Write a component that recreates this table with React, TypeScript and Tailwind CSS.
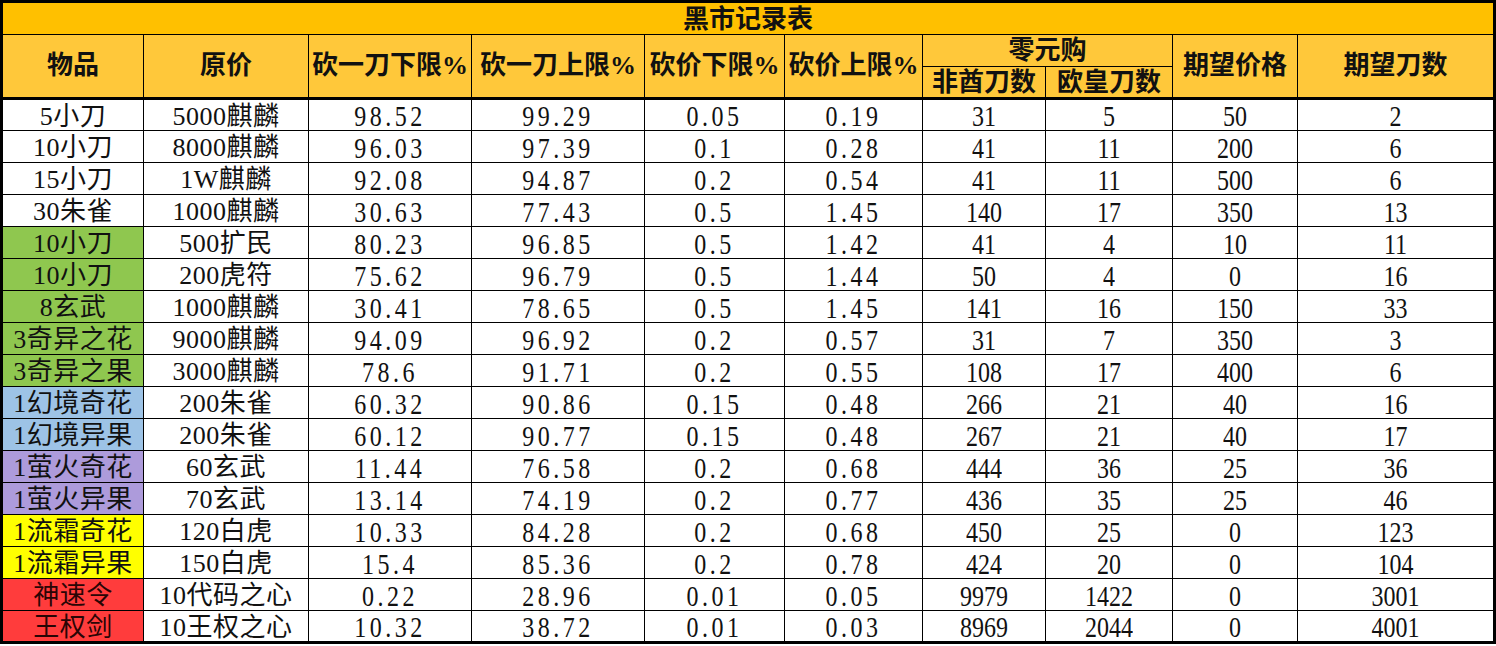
import React from "react";

type Row = { c: string[]; bg: string; red?: boolean };

const W = "bg-white";
const G = "bg-[#8fc74f]";
const B = "bg-[#9dc3e6]";
const P = "bg-[#ad9bdb]";
const Y = "bg-[#ffff00]";
const R = "bg-[#ff3c3c]";

const rows: Row[] = [
  { c: ["5小刀", "5000麒麟", "98.52", "99.29", "0.05", "0.19", "31", "5", "50", "2"], bg: W },
  { c: ["10小刀", "8000麒麟", "96.03", "97.39", "0.1", "0.28", "41", "11", "200", "6"], bg: W },
  { c: ["15小刀", "1W麒麟", "92.08", "94.87", "0.2", "0.54", "41", "11", "500", "6"], bg: W },
  { c: ["30朱雀", "1000麒麟", "30.63", "77.43", "0.5", "1.45", "140", "17", "350", "13"], bg: W },
  { c: ["10小刀", "500扩民", "80.23", "96.85", "0.5", "1.42", "41", "4", "10", "11"], bg: G },
  { c: ["10小刀", "200虎符", "75.62", "96.79", "0.5", "1.44", "50", "4", "0", "16"], bg: G },
  { c: ["8玄武", "1000麒麟", "30.41", "78.65", "0.5", "1.45", "141", "16", "150", "33"], bg: G },
  { c: ["3奇异之花", "9000麒麟", "94.09", "96.92", "0.2", "0.57", "31", "7", "350", "3"], bg: G },
  { c: ["3奇异之果", "3000麒麟", "78.6", "91.71", "0.2", "0.55", "108", "17", "400", "6"], bg: G },
  { c: ["1幻境奇花", "200朱雀", "60.32", "90.86", "0.15", "0.48", "266", "21", "40", "16"], bg: B },
  { c: ["1幻境异果", "200朱雀", "60.12", "90.77", "0.15", "0.48", "267", "21", "40", "17"], bg: B },
  { c: ["1萤火奇花", "60玄武", "11.44", "76.58", "0.2", "0.68", "444", "36", "25", "36"], bg: P },
  { c: ["1萤火异果", "70玄武", "13.14", "74.19", "0.2", "0.77", "436", "35", "25", "46"], bg: P },
  { c: ["1流霜奇花", "120白虎", "10.33", "84.28", "0.2", "0.68", "450", "25", "0", "123"], bg: Y },
  { c: ["1流霜异果", "150白虎", "15.4", "85.36", "0.2", "0.78", "424", "20", "0", "104"], bg: Y },
  { c: ["神速令", "10代码之心", "0.22", "28.96", "0.01", "0.05", "9979", "1422", "0", "3001"], bg: R, red: true },
  { c: ["王权剑", "10王权之心", "10.32", "38.72", "0.01", "0.03", "8969", "2044", "0", "4001"], bg: R, red: true },
];

const widths = [142, 165, 163, 173, 140, 138, 123, 127, 125, 197];

export default function App() {
  const font = "font-['Liberation_Serif','Noto_Sans_CJK_SC',serif]";
  const hd =
    "border border-black bg-[#ffc83a] text-center font-bold text-[26px] text-[#111] leading-none p-0 whitespace-nowrap";
  return (
    <div className="w-[1496px] h-[646px] bg-white overflow-hidden">
      <table className={`border-collapse table-fixed w-[1493px] border-[3px] border-black ${font} text-[#111]`}>
        <colgroup>
          {widths.map((w, i) => (
            <col key={i} style={{ width: w }} />
          ))}
        </colgroup>
        <thead>
          <tr className="h-[33px]">
            <th colSpan={10} className="border border-black bg-[#ffc000] text-center font-bold text-[26px] leading-none p-0 pt-[2px]">
              黑市记录表
            </th>
          </tr>
          <tr className="h-[32px]">
            <th rowSpan={2} className={`${hd} border-b-[3px]`}>物品</th>
            <th rowSpan={2} className={`${hd} border-b-[3px]`}>原价</th>
            <th rowSpan={2} className={`${hd} border-b-[3px]`}>砍一刀下限%</th>
            <th rowSpan={2} className={`${hd} border-b-[3px]`}>砍一刀上限%</th>
            <th rowSpan={2} className={`${hd} border-b-[3px]`}>砍价下限%</th>
            <th rowSpan={2} className={`${hd} border-b-[3px]`}>砍价上限%</th>
            <th colSpan={2} className={hd}>零元购</th>
            <th rowSpan={2} className={`${hd} border-b-[3px]`}>期望价格</th>
            <th rowSpan={2} className={`${hd} border-b-[3px]`}>期望刀数</th>
          </tr>
          <tr className="h-[32px]">
            <th className={`${hd} border-b-[3px] pt-[2px]`}>非酋刀数</th>
            <th className={`${hd} border-b-[3px] pt-[2px]`}>欧皇刀数</th>
          </tr>
        </thead>
        <tbody>
          {rows.map((r, i) => (
            <tr key={i} className="h-[32px]">
              {r.c.map((v, j) => (
                <td
                  key={j}
                  className={`border border-black text-center p-0 pt-[3px] leading-none whitespace-nowrap ${
                    j === 0 ? r.bg : "bg-white"
                  } ${j === 0 && r.red ? "text-[#2a0505]" : ""}`}
                >
                  {j <= 1 ? (
                    <span className="inline-block text-[26px] leading-[24px] tracking-[0.5px]">{v}</span>
                  ) : j <= 5 ? (
                    <span className="inline-block text-[24px] leading-[20px] tracking-[3.5px] scale-y-125">{v}</span>
                  ) : (
                    <span className="inline-block text-[24px] leading-[20px] scale-y-125">{v}</span>
                  )}
                </td>
              ))}
            </tr>
          ))}
        </tbody>
      </table>
    </div>
  );
}
